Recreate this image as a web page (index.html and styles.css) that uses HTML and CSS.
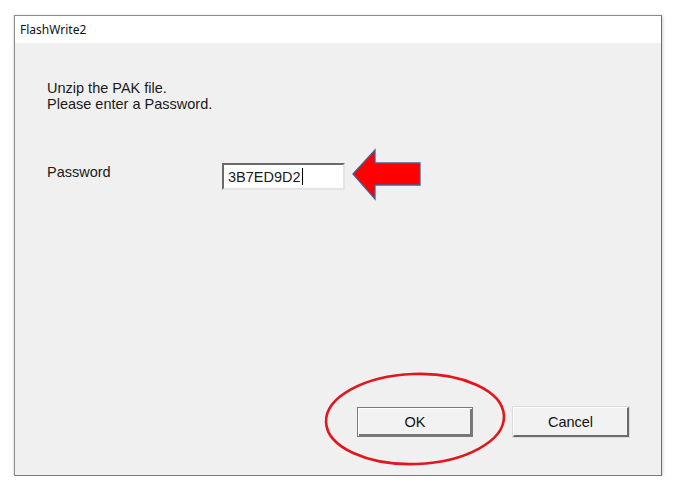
FILE: index.html
```html
<!DOCTYPE html>
<html>
<head>
<meta charset="utf-8">
<link rel="stylesheet" href="styles.css">
</head>
<body>
<div class="dialog">
  <div class="titlebar">FlashWrite2</div>
  <div class="content">
    <div class="message">
      <div>Unzip the PAK file.</div>
      <div>Please enter a Password.</div>
    </div>
    <div class="form-row">
      <div class="label">Password</div>
      <div class="field">3B7ED9D2<span class="caret"></span></div>
      <svg class="arrow" width="70" height="54" viewBox="0 0 70 54">
        <polygon points="1,26 23,2 23,15 68,15 68,37 23,37 23,51" fill="#ff0000" stroke="#4a5f94" stroke-width="1.3" stroke-linejoin="miter"/>
      </svg>
    </div>
    <div class="buttons">
      <div class="btn btn-default">OK</div>
      <div class="btn">Cancel</div>
      <svg class="circle" width="184" height="96" viewBox="0 0 184 96">
        <ellipse cx="92" cy="48" rx="89" ry="45" fill="none" stroke="#e3161d" stroke-width="2.6" transform="rotate(-2 92 48)"/>
      </svg>
    </div>
  </div>
</div>
</body>
</html>
```
FILE: styles.css
```css
html, body {
  margin: 0;
  padding: 0;
  background: #ffffff;
}
body {
  padding: 15px 0 0 14px;
  font-family: "Liberation Sans", Arial, sans-serif;
  color: #000;
}
.dialog {
  width: 646px;
  height: 459px;
  border: 1px solid #8c8c8c;
  border-right-color: #6e6e6e;
  border-bottom-color: #7a7a7a;
  background: #f0f0f0;
  display: flex;
  flex-direction: column;
  box-shadow: 1px 1px 3px rgba(0,0,0,0.18), -1px 0 2px rgba(0,0,0,0.08);
}
.titlebar {
  height: 27px;
  line-height: 27px;
  background: #ffffff;
  padding-left: 5px;
  font-family: "Noto Sans", "Open Sans", sans-serif;
  font-size: 12px;
  color: #111;
}
.content {
  flex: 1;
  display: flex;
  flex-direction: column;
  padding: 37px 32px 38px 32px;
  font-size: 14.5px;
  line-height: 16px;
  color: #1a1a1a;
}
.message {
  display: flex;
  flex-direction: column;
}
.form-row {
  position: relative;
  display: flex;
  align-items: flex-start;
  margin-top: 51px;
}
.label {
  width: 175px;
  margin-top: 1px;
}
.field {
  width: 115px;
  height: 23px;
  background: #ffffff;
  border-top: 2px solid #6a6a6a;
  border-left: 2px solid #6a6a6a;
  border-right: 2px solid #e4e4e4;
  border-bottom: 2px solid #e4e4e4;
  padding-left: 4px;
  line-height: 24px;
  display: flex;
  align-items: center;
}
.caret {
  display: inline-block;
  width: 1px;
  height: 17px;
  background: #000;
  margin-left: 1px;
}
.arrow {
  position: absolute;
  left: 305px;
  top: -15px;
}
.buttons {
  position: relative;
  margin-top: auto;
  display: flex;
  justify-content: flex-end;
  gap: 40px;
}
.btn {
  width: 116px;
  height: 30px;
  box-sizing: border-box;
  background: #f2f2f2;
  border-top: 1px solid #ffffff;
  border-left: 1px solid #ffffff;
  border-right: 2px solid #6b6b6b;
  border-bottom: 2px solid #6b6b6b;
  box-shadow: 0 0 0 1px #dcdcdc;
  display: flex;
  align-items: center;
  justify-content: center;
  font-size: 14.5px;
  color: #111;
}
.btn-default {
  border: 1px solid #7a7a7a;
  box-shadow: inset 1px 1px 0 #ffffff, inset -2px -2px 0 #777777;
}
.circle {
  position: absolute;
  right: 122px;
  top: -36px;
}
```
